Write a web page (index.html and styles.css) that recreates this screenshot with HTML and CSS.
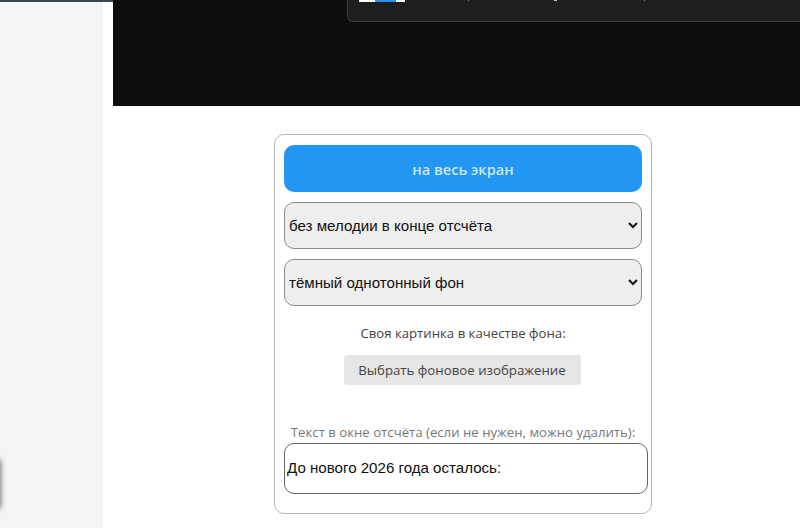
FILE: index.html
```html
<!DOCTYPE html>
<html lang="ru">
<head>
<meta charset="utf-8">
<title>Отсчёт</title>
<link rel="stylesheet" href="styles.css">
</head>
<body>
<div class="topline"></div>
<div class="page">
  <aside class="side"><div class="side-tab"></div></aside>
  <main class="main">
    <div class="stage">
      <div class="toast">
        <div class="toast-icon"><span class="seg-white"></span><span class="seg-blue"></span><span class="seg-white2"></span></div>
        <div class="toast-dots"><i class="d1"></i><i class="d2"></i><i class="d3"></i></div>
      </div>
    </div>
    <section class="panel">
      <button class="full">на весь экран</button>
      <select class="sel"><option>без мелодии в конце отсчёта</option></select>
      <select class="sel sel2"><option>тёмный однотонный фон</option></select>
      <div class="cap">Своя картинка в качестве фона:</div>
      <div class="pick-row"><button class="pick">Выбрать фоновое изображение</button></div>
      <div class="cap2">Текст в окне отсчёта (если не нужен, можно удалить):</div>
      <textarea class="txt" spellcheck="false">До нового 2026 года осталось:</textarea>
    </section>
  </main>
</div>
</body>
</html>
```

FILE: styles.css
```css
* { box-sizing: border-box; }
html, body { margin: 0; padding: 0; height: 528px; overflow: hidden; background: #fff; }
body { position: relative; font-family: "Open Sans", "Noto Sans", sans-serif; }
.topline { position: absolute; left: 0; top: 0; width: 113px; height: 2px; background: #3d4555; z-index: 2; }
.page { display: flex; height: 528px; }
.side { width: 103px; flex: none; background: #f4f4f4; position: relative; }
.side-tab { position: absolute; left: -6px; top: 460px; width: 6px; height: 48px; border-radius: 3px; box-shadow: 0 0 5px 1px rgba(0,0,0,.5); }
.main { flex: 1; padding-left: 10px; display: flex; flex-direction: column; min-width: 0; }
.stage { width: 100%; height: 106px; flex: none; background: #0e0e0e; position: relative; }
.toast { position: absolute; left: 234px; top: -20px; right: -10px; height: 42px; background: #1e1e1e; border: 1px solid #3a3a3a; border-right: 0; border-radius: 0 0 0 6px; }
.toast-icon { position: absolute; left: 11px; top: 19px; width: 46px; height: 2px; display: flex; }
.seg-white { width: 16px; background: #fff; }
.seg-blue { width: 21px; background: #2196f3; }
.seg-white2 { width: 9px; background: #fff; }
.toast-dots i { position: absolute; top: 19px; width: 1px; height: 1px; background: #7f94a4; }
.toast-dots .d1 { left: 120px; }
.toast-dots .d2 { left: 206px; background: #d9c5b0; width: 3px; }
.toast-dots .d3 { left: 296px; }
.panel { width: 378px; height: 380px; margin: 28px 0 0 161px; flex: none; border: 1px solid #b5b5b5; border-radius: 10px; padding: 10px 9px 0; background: #fff; display: flex; flex-direction: column; align-items: flex-start; }
.full { width: 358px; height: 47px; flex: none; border: 0; border-radius: 10px; background: #2196f3; color: #cfe6fa; font: 600 14.6px "Open Sans", sans-serif; padding: 0; }
.sel { width: 358px; height: 47px; flex: none; margin-top: 10px; border: 1px solid #8a8a8a; border-radius: 10px; background-color: #eeeeee; color: #111; font: 15.1px "Liberation Sans", Arial, sans-serif; padding: 0; }
.cap { width: 358px; margin-top: 18px; text-align: center; font-size: 13.2px; line-height: 18px; color: #444; }
.pick-row { width: 356px; display: flex; justify-content: center; margin-top: 13px; }
.pick { width: 237px; height: 30px; border: 0; border-radius: 3px; background: #e6e6e6; color: #444; font: 13.25px "Open Sans", sans-serif; padding: 0; }
.cap2 { width: 358px; margin-top: 38px; text-align: center; font-size: 13.2px; line-height: 18px; color: #777; white-space: nowrap; }
.txt { display: block; width: 364px; height: 51px; flex: none; margin-top: 2px; border: 1px solid #666; border-radius: 10px; background: #fff; color: #111; font: 15.1px "Liberation Sans", Arial, sans-serif; padding: 15px 2px 0; resize: none; outline: 0; overflow: hidden; }
```
